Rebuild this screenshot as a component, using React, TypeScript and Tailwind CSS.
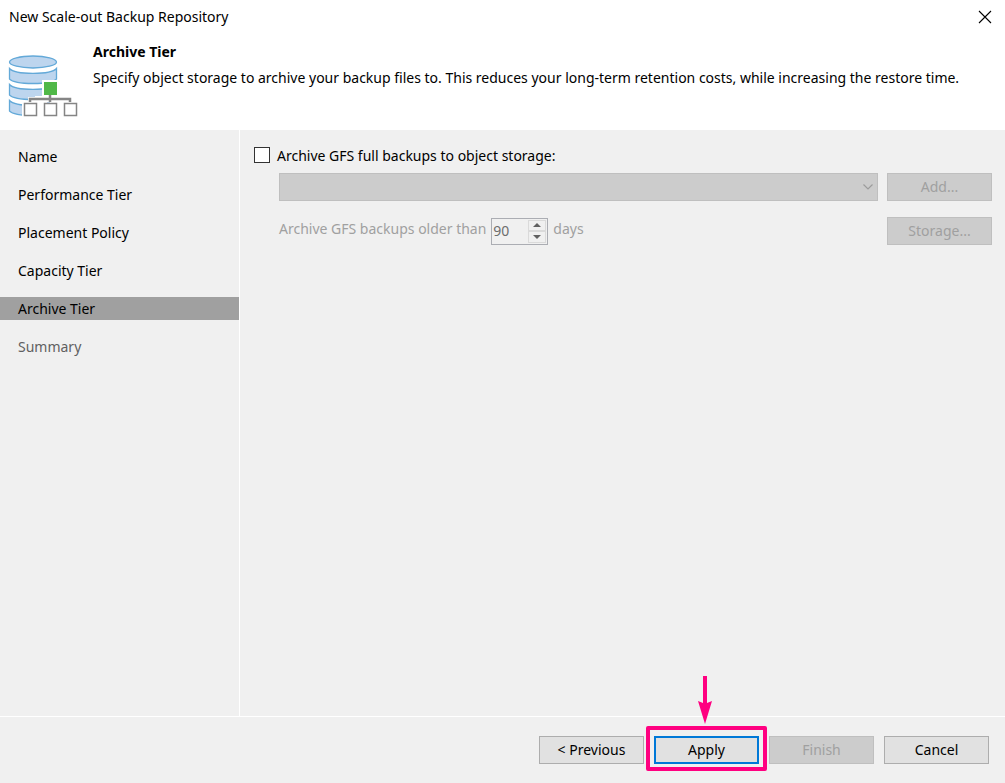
import { useState } from "react";

const steps = [
  "Name",
  "Performance Tier",
  "Placement Policy",
  "Capacity Tier",
  "Archive Tier",
  "Summary",
];

const current = "Archive Tier";

function stepStyle(step: string) {
  if (step === current) return "bg-[#a0a0a0] text-black";
  if (step === "Summary") return "text-[#606060]";
  return "text-black";
}

const buttonBase =
  "flex h-7 w-[105px] shrink-0 items-center justify-center";
const enabledButton = "border border-[#adadad] bg-[#e1e1e1] text-black";
const disabledButton = "border border-[#bfbfbf] bg-[#cccccc] text-[#a0a0a0]";

function RepositoryIcon() {
  return (
    <svg width="72" height="66" viewBox="0 0 72 66" aria-hidden="true" className="shrink-0">
      <g fill="#bdd5ee" stroke="#63a9d8" strokeWidth="1.3">
        <ellipse cx="25" cy="8" rx="23.5" ry="6" />
        <path d="M1.5 14.5C7 21 43 21 48.5 14.5V25C43 31 7 31 1.5 25Z" />
        <path d="M1.5 30.5C7 37 43 37 48.5 30.5V41C43 47 7 47 1.5 41Z" />
        <path d="M1.5 46.5C7 53 43 53 48.5 46.5V57C43 63 7 63 1.5 57Z" />
      </g>
      <path
        d="M34 26H51V42H66V46H72V64H42V61H38V64H22V47H27V42H34Z"
        fill="#fff"
      />
      <path d="M14 47H20V43H34V64H14Z" fill="#fff" />
      <path d="M39 48H42V61H39Z" fill="#bdd5ee" />
      <path d="M42 40V48M22 48V45H62V48" fill="none" stroke="#858585" strokeWidth="2.5" />
      <rect x="36" y="28" width="13" height="13" fill="#50b848" />
      <g fill="#fff" stroke="#858585" strokeWidth="1.5">
        <rect x="16.5" y="49.5" width="12" height="12" />
        <rect x="36.5" y="49.5" width="12" height="12" />
        <rect x="56.5" y="49.5" width="12" height="12" />
      </g>
    </svg>
  );
}

export default function App() {
  const [archive, setArchive] = useState(false);

  return (
    <div className="flex min-h-screen flex-col bg-[#f0f0f0] font-['Noto_Sans','Open_Sans',sans-serif] text-sm leading-5 text-black">
      <header className="flex h-[130px] shrink-0 flex-col bg-white">
        <div className="flex h-[34px] items-center justify-between pr-3 pl-[9px]">
          <h1>New Scale-out Backup Repository</h1>
          <button type="button" aria-label="Close" className="flex h-5 w-4 items-center justify-center">
            <svg width="14" height="14" viewBox="0 0 14 14" aria-hidden="true">
              <path d="M1 1L13 13M13 1L1 13" stroke="#000" strokeWidth="1.1" />
            </svg>
          </button>
        </div>
        <div className="flex gap-3 pt-2 pl-2">
          <div className="w-[73px] shrink-0 pt-3">
            <RepositoryIcon />
          </div>
          <div className="flex flex-col gap-[6px]">
            <h2 className="font-bold">Archive Tier</h2>
            <p className="whitespace-nowrap">
              Specify object storage to archive your backup files to. This reduces your long-term
              retention costs, while increasing the restore time.
            </p>
          </div>
        </div>
      </header>

      <div className="flex grow">
        <nav className="w-60 shrink-0 border-r border-white pt-[15px]">
          <ul className="flex flex-col gap-[15px]">
            {steps.map((step) => (
              <li key={step}>
                <a
                  href="#"
                  aria-current={step === current ? "step" : undefined}
                  className={`flex h-[23px] items-center pl-[18px] ${stepStyle(step)}`}
                >
                  {step}
                </a>
              </li>
            ))}
          </ul>
        </nav>

        <main className="flex grow flex-col pt-4 pr-[13px] pl-[14px]">
          <label className="flex items-start gap-[7px]">
            <input
              type="checkbox"
              checked={archive}
              onChange={(e) => setArchive(e.target.checked)}
              className="mt-px size-4 appearance-none border border-[#333333] bg-white checked:bg-[#0078d7]"
            />
            Archive GFS full backups to object storage:
          </label>

          <div className="mt-[7px] flex gap-[9px] pl-[25px]">
            <div className="grid grow">
              <select
                disabled
                aria-label="Object storage"
                className="col-start-1 row-start-1 h-7 w-full appearance-none border border-[#bfbfbf] bg-[#cccccc] opacity-100"
              />
              <svg
                width="10"
                height="6"
                viewBox="0 0 10 6"
                aria-hidden="true"
                className="pointer-events-none col-start-1 row-start-1 mr-[5px] self-center justify-self-end"
              >
                <path d="M0.5 0.5L5 5L9.5 0.5" fill="none" stroke="#9c9c9c" strokeWidth="1.2" />
              </svg>
            </div>
            <button type="button" disabled className={`${buttonBase} ${disabledButton}`}>
              Add...
            </button>
          </div>

          <div className="mt-4 flex items-center justify-between pl-[25px] text-[#a0a0a0]">
            <div className="flex items-center gap-[5px]">
              <label htmlFor="age" className="-mt-1">
                Archive GFS backups older than
              </label>
              <div className="flex h-[27px] w-[57px] border border-[#abadb3] p-px">
                <input
                  id="age"
                  type="text"
                  defaultValue="90"
                  disabled
                  className="w-0 grow bg-transparent text-[#6d6d6d]"
                />
                <div className="flex w-[18px] shrink-0 flex-col">
                  <button
                    type="button"
                    disabled
                    aria-label="Increase"
                    className="flex grow items-center justify-center border border-[#dadada]"
                  >
                    <svg width="8" height="4" viewBox="0 0 8 4" aria-hidden="true">
                      <path d="M0 4L4 0L8 4Z" fill="#606060" />
                    </svg>
                  </button>
                  <button
                    type="button"
                    disabled
                    aria-label="Decrease"
                    className="flex grow items-center justify-center border border-[#dadada]"
                  >
                    <svg width="8" height="4" viewBox="0 0 8 4" aria-hidden="true">
                      <path d="M0 0L4 4L8 0Z" fill="#606060" />
                    </svg>
                  </button>
                </div>
              </div>
              <span className="-mt-1">days</span>
            </div>
            <button type="button" disabled className={`${buttonBase} ${disabledButton}`}>
              Storage...
            </button>
          </div>
        </main>
      </div>

      <footer className="flex h-[67px] shrink-0 items-start justify-end gap-[10px] border-t border-white pt-[19px] pr-4">
        <button type="button" className={`${buttonBase} ${enabledButton}`}>
          &lt; Previous
        </button>
        <div className="relative">
          <button
            type="button"
            className={`${buttonBase} border-2 border-[#0078d7] bg-[#e1e1e1] text-black`}
          >
            Apply
          </button>
          <div className="pointer-events-none absolute -inset-x-2 -top-[10px] -bottom-[7px] z-10 rounded-xs border-4 border-[#ff0080]" />
          <svg
            width="14"
            height="48"
            viewBox="0 0 14 48"
            aria-hidden="true"
            className="pointer-events-none absolute bottom-full left-11 mb-3"
          >
            <path d="M5 0H9V27L14 25L7 48L0 25L5 27Z" fill="#ff0080" />
          </svg>
        </div>
        <button type="button" disabled className={`${buttonBase} ${disabledButton}`}>
          Finish
        </button>
        <button type="button" className={`${buttonBase} ${enabledButton}`}>
          Cancel
        </button>
      </footer>
    </div>
  );
}
